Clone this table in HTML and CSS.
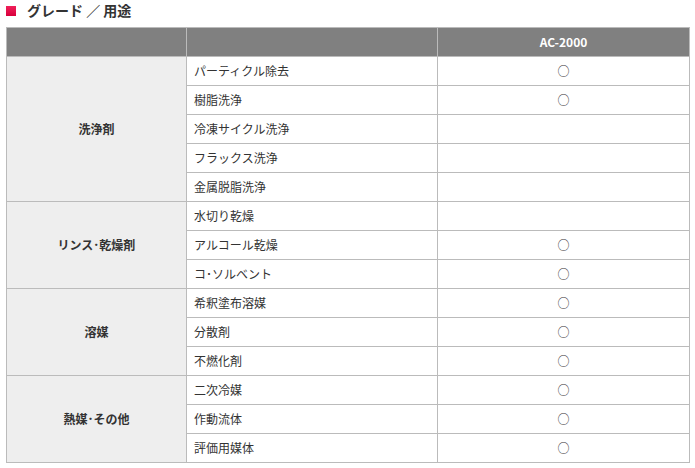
FILE: index.html
```html
<!DOCTYPE html>
<html lang="ja">
<head>
<meta charset="utf-8">
<link rel="stylesheet" href="styles.css">
</head>
<body>
<h2 class="title"><span class="mark"></span>グレード ／ 用途</h2>
<table class="grade">
  <colgroup><col class="c1"><col class="c2"><col class="c3"></colgroup>
  <thead>
    <tr><th></th><th></th><th>AC-2000</th></tr>
  </thead>
  <tbody>
    <tr><td class="cat" rowspan="5">洗浄剤</td><td>パーティクル除去</td><td class="mk">○</td></tr>
    <tr><td>樹脂洗浄</td><td class="mk">○</td></tr>
    <tr><td>冷凍サイクル洗浄</td><td class="mk"></td></tr>
    <tr><td>フラックス洗浄</td><td class="mk"></td></tr>
    <tr><td>金属脱脂洗浄</td><td class="mk"></td></tr>
    <tr><td class="cat" rowspan="3">リンス･乾燥剤</td><td>水切り乾燥</td><td class="mk"></td></tr>
    <tr><td>アルコール乾燥</td><td class="mk">○</td></tr>
    <tr><td>コ･ソルベント</td><td class="mk">○</td></tr>
    <tr><td class="cat" rowspan="3">溶媒</td><td>希釈塗布溶媒</td><td class="mk">○</td></tr>
    <tr><td>分散剤</td><td class="mk">○</td></tr>
    <tr><td>不燃化剤</td><td class="mk">○</td></tr>
    <tr><td class="cat" rowspan="3">熱媒･その他</td><td>二次冷媒</td><td class="mk">○</td></tr>
    <tr><td>作動流体</td><td class="mk">○</td></tr>
    <tr><td>評価用媒体</td><td class="mk">○</td></tr>
  </tbody>
</table>
</body>
</html>
```
FILE: styles.css
```css
body {
  margin: 0;
  padding: 0 6px;
  font-family: "Noto Sans CJK JP", "DejaVu Sans", sans-serif;
  color: #333;
  background: #fff;
}
.title {
  display: flex;
  align-items: center;
  gap: 11px;
  margin: 0;
  height: 21px;
  font-size: 14px;
  font-weight: bold;
  color: #333;
  line-height: 21px;
}
.mark {
  width: 10px;
  height: 10px;
  background: linear-gradient(#f0205a, #d8003c);
}
.grade {
  margin-top: 6px;
  width: 683px;
  border-collapse: collapse;
  table-layout: fixed;
  font-size: 12px;
}
.c1 { width: 180px; }
.c2 { width: 251px; }
.c3 { width: 252px; }
.grade th, .grade td {
  border: 1px solid #bbb;
  height: 28px;
  padding: 0;
  line-height: 16px;
}
.grade th {
  background: #808080;
  color: #fff;
  font-weight: bold;
  text-align: center;
}
.grade td {
  padding-left: 7px;
  color: #333;
}
.grade td.cat {
  background: #eee;
  font-weight: bold;
  text-align: center;
  padding-left: 0;
}
.grade td.mk {
  text-align: center;
  padding-left: 0;
}
```
